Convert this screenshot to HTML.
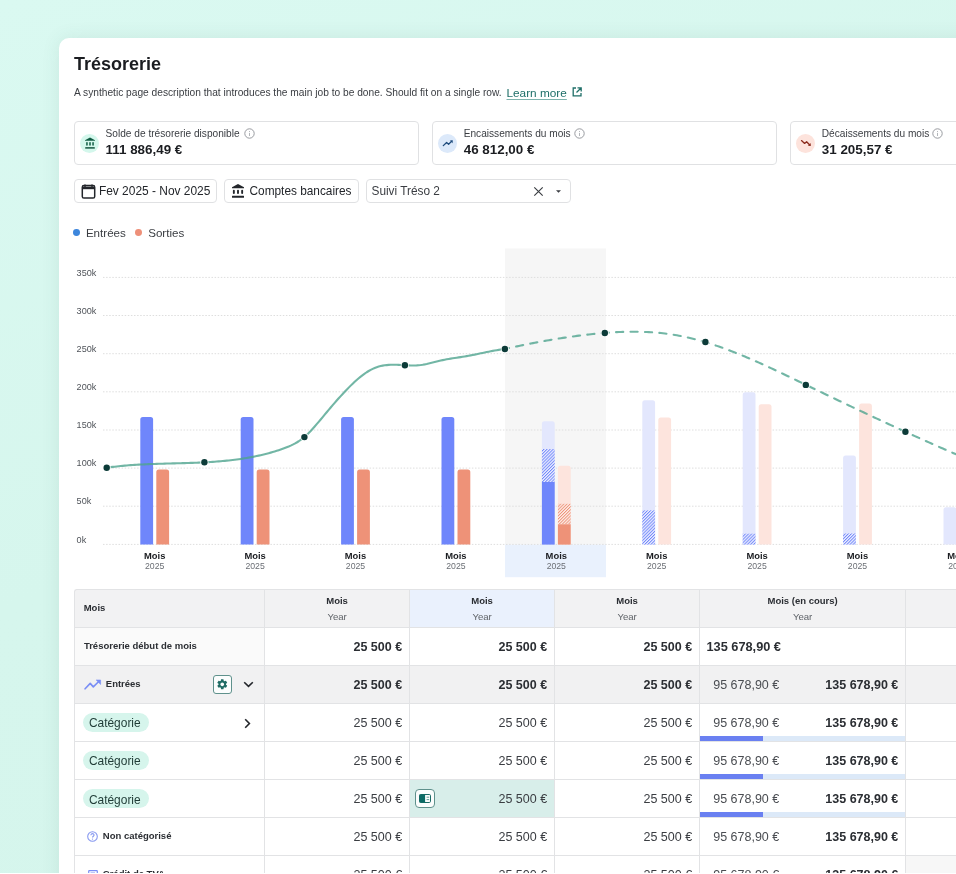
<!DOCTYPE html>
<html><head><meta charset="utf-8"><style>
html,body{margin:0;padding:0;}
#root{position:absolute;left:0;top:0;width:956px;height:874px;will-change:transform;}
body{width:956px;height:874px;overflow:hidden;position:relative;font-family:"Liberation Sans", sans-serif;background:linear-gradient(160deg,#daf9f1 0%,#d6f6ed 50%,#d5f5ec 100%);}
.a{position:absolute;}
.t{position:absolute;line-height:1;white-space:nowrap;}
.card{border:1px solid #e0e1e3;border-radius:4px;box-sizing:border-box;background:#fff;}
#main{position:absolute;left:59px;top:38px;width:1000px;height:900px;background:#fff;border-radius:10px;box-shadow:0 0 18px rgba(60,100,90,0.10);}
#bot{position:absolute;left:0;top:872.5px;width:956px;height:2px;background:#fff;}
</style></head><body>
<div id="main"></div>
<div id="root">
<div class="t" style="left:74.0px;top:55.16px;font-size:18px;font-weight:700;color:#1b1d21;">Trésorerie</div>
<div class="t" style="left:74.0px;top:87.87px;font-size:10.2px;font-weight:400;color:#3a3d42;">A synthetic page description that introduces the main job to be done. Should fit on a single row.</div>
<div class="t" style="left:506.5px;top:87.51px;font-size:11.8px;font-weight:400;color:#1f6f68;text-decoration:underline;text-decoration-color:#7fb3ad;text-underline-offset:2px;">Learn more</div>
<svg class="a" style="left:571px;top:86px" width="12" height="12" viewBox="0 0 12 12"><path d="M5 2H2.2v7.8H10V7" fill="none" stroke="#1f6f68" stroke-width="1.3"/><path d="M6.5 1.8H10.2V5.5M10 2L5.5 6.5" fill="none" stroke="#1f6f68" stroke-width="1.3"/></svg>
<div class="a card" style="left:74.2px;top:121.2px;width:344.4px;height:44px"></div>
<div class="a" style="left:80.1px;top:133.5px;width:19px;height:19px;border-radius:50%;background:#d4f7ec"></div>
<svg class="a" style="left:83.6px;top:137.0px" width="12" height="12" viewBox="0 0 12 12"><path d="M6 0.6L11 3.2V3.8H1V3.2z" fill="#0f5c43"/><rect x="2.2" y="5.1" width="1.5" height="3.6" rx="0.75" fill="#0f5c43"/><rect x="5.25" y="5.1" width="1.5" height="3.6" rx="0.75" fill="#0f5c43"/><rect x="8.3" y="5.1" width="1.5" height="3.6" rx="0.75" fill="#0f5c43"/><rect x="1.2" y="10.1" width="9.6" height="1.7" rx="0.3" fill="#2f6e58"/></svg>
<div class="t" style="left:105.6px;top:129.01px;font-size:10.15px;font-weight:400;color:#3a3d42;">Solde de trésorerie disponible</div>
<svg class="a" style="left:244.0px;top:127.9px" width="11" height="11" viewBox="0 0 11 11"><circle cx="5.5" cy="5.5" r="4.7" fill="none" stroke="#8d9095" stroke-width="0.9"/><path d="M5.5 4.9V8" stroke="#a0a3a8" stroke-width="0.8"/><circle cx="5.5" cy="3.4" r="0.5" fill="#a0a3a8"/></svg>
<div class="t" style="left:105.6px;top:143.46px;font-size:13.4px;font-weight:700;color:#1b1d21;">111 886,49 €</div>
<div class="a card" style="left:432.3px;top:121.2px;width:344.4px;height:44px"></div>
<div class="a" style="left:438.2px;top:133.5px;width:19px;height:19px;border-radius:50%;background:#dce9fa"></div>
<svg class="a" style="left:441.7px;top:137.0px" width="12" height="12" viewBox="0 0 12 12"><path d="M1.3 8.6L4.6 5.5L6.6 7.2L10 3.9" fill="none" stroke="#1d4a7c" stroke-width="1.3" stroke-linecap="round" stroke-linejoin="round"/><path d="M7.8 3.4H10.6V6.2z" fill="#1d4a7c"/></svg>
<div class="t" style="left:463.7px;top:129.01px;font-size:10.15px;font-weight:400;color:#3a3d42;">Encaissements du mois</div>
<svg class="a" style="left:573.6px;top:127.9px" width="11" height="11" viewBox="0 0 11 11"><circle cx="5.5" cy="5.5" r="4.7" fill="none" stroke="#8d9095" stroke-width="0.9"/><path d="M5.5 4.9V8" stroke="#a0a3a8" stroke-width="0.8"/><circle cx="5.5" cy="3.4" r="0.5" fill="#a0a3a8"/></svg>
<div class="t" style="left:463.7px;top:143.46px;font-size:13.4px;font-weight:700;color:#1b1d21;">46 812,00 €</div>
<div class="a card" style="left:790.4px;top:121.2px;width:344.4px;height:44px"></div>
<div class="a" style="left:796.3px;top:133.5px;width:19px;height:19px;border-radius:50%;background:#fde3dc"></div>
<svg class="a" style="left:799.8px;top:137.0px" width="12" height="12" viewBox="0 0 12 12"><path d="M1.5 3.6L4.6 6.4L6.6 4.8L10 8.2" fill="none" stroke="#8b2a1c" stroke-width="1.3" stroke-linecap="round" stroke-linejoin="round"/><path d="M7.8 8.7H10.6V5.9z" fill="#8b2a1c"/></svg>
<div class="t" style="left:821.8px;top:129.01px;font-size:10.15px;font-weight:400;color:#3a3d42;">Décaissements du mois</div>
<svg class="a" style="left:932.4px;top:127.9px" width="11" height="11" viewBox="0 0 11 11"><circle cx="5.5" cy="5.5" r="4.7" fill="none" stroke="#8d9095" stroke-width="0.9"/><path d="M5.5 4.9V8" stroke="#a0a3a8" stroke-width="0.8"/><circle cx="5.5" cy="3.4" r="0.5" fill="#a0a3a8"/></svg>
<div class="t" style="left:821.8px;top:143.46px;font-size:13.4px;font-weight:700;color:#1b1d21;">31 205,57 €</div>
<div class="a card" style="left:74px;top:178.5px;width:142.8px;height:24.5px"></div>
<svg class="a" style="left:80.5px;top:183.5px" width="15" height="15" viewBox="0 0 15 15"><rect x="1.3" y="1.6" width="12.4" height="12.4" rx="1.6" fill="none" stroke="#23262b" stroke-width="1.5"/><path d="M1.3 2.6h12.4v2.6H1.3z" fill="#23262b"/><path d="M4 0.4v2.5M11 0.4v2.5" stroke="#23262b" stroke-width="1.4"/></svg>
<div class="t" style="left:98.9px;top:185.68px;font-size:11.95px;font-weight:400;color:#23262b;">Fev 2025 - Nov 2025</div>
<div class="a card" style="left:223.7px;top:178.5px;width:135px;height:24.5px"></div>
<svg class="a" style="left:231px;top:184.3px" width="14" height="14" viewBox="0 0 14 14"><path d="M7 0L13 3.2V4.2H1V3.2z" fill="#23262b"/><rect x="1.9" y="5.8" width="1.9" height="4.2" rx="0.9" fill="#23262b"/><rect x="6.05" y="5.8" width="1.9" height="4.2" rx="0.9" fill="#23262b"/><rect x="10.2" y="5.8" width="1.9" height="4.2" rx="0.9" fill="#23262b"/><rect x="1" y="11.7" width="12" height="2" rx="0.3" fill="#23262b"/></svg>
<div class="t" style="left:249.5px;top:185.77px;font-size:11.85px;font-weight:400;color:#23262b;">Comptes bancaires</div>
<div class="a card" style="left:365.5px;top:178.5px;width:205.5px;height:24.5px"></div>
<div class="t" style="left:371.5px;top:185.77px;font-size:11.85px;font-weight:400;color:#3a3d42;">Suivi Tréso 2</div>
<svg class="a" style="left:532.5px;top:185.6px" width="11" height="11" viewBox="0 0 11 11"><path d="M1.3 1.3L9.7 9.7M9.7 1.3L1.3 9.7" stroke="#3a3d42" stroke-width="1.15"/></svg>
<svg class="a" style="left:555px;top:188.5px" width="7" height="5" viewBox="0 0 7 5"><path d="M1 1.2H6L3.5 3.8z" fill="#3a3d42"/></svg>
<div class="a" style="left:73.4px;top:229.1px;width:6.8px;height:6.8px;border-radius:50%;background:#3d86dc"></div>
<div class="t" style="left:85.9px;top:227.08px;font-size:11.6px;font-weight:400;color:#3a3d42;">Entrées</div>
<div class="a" style="left:135.3px;top:229.1px;width:6.8px;height:6.8px;border-radius:50%;background:#ee9079"></div>
<div class="t" style="left:148.2px;top:227.08px;font-size:11.6px;font-weight:400;color:#3a3d42;">Sorties</div>
<svg class="a" style="left:0;top:0" width="956" height="600" viewBox="0 0 956 600" font-family="Liberation Sans, sans-serif"><defs><pattern id="hb" patternUnits="userSpaceOnUse" width="2.2" height="3" patternTransform="rotate(45)"><rect width="2.2" height="3" fill="#eef0fe"/><rect width="0.95" height="3" fill="#6f86fb"/></pattern><pattern id="ho" patternUnits="userSpaceOnUse" width="2.2" height="3" patternTransform="rotate(45)"><rect width="2.2" height="3" fill="#fdeee9"/><rect width="0.95" height="3" fill="#ee9278"/></pattern></defs><rect x="505" y="248.5" width="101" height="296.1" fill="#f6f6f6"/><rect x="505" y="544.6" width="101" height="32.6" fill="#e9f1fd"/><line x1="103" y1="277.4" x2="956" y2="277.4" stroke="#dedede" stroke-width="1" stroke-dasharray="1.5 1.6"/><text x="76.6" y="275.6" font-size="9.1" fill="#50545a">350k</text><line x1="103" y1="315.5" x2="956" y2="315.5" stroke="#dedede" stroke-width="1" stroke-dasharray="1.5 1.6"/><text x="76.6" y="313.7" font-size="9.1" fill="#50545a">300k</text><line x1="103" y1="353.7" x2="956" y2="353.7" stroke="#dedede" stroke-width="1" stroke-dasharray="1.5 1.6"/><text x="76.6" y="351.9" font-size="9.1" fill="#50545a">250k</text><line x1="103" y1="391.8" x2="956" y2="391.8" stroke="#dedede" stroke-width="1" stroke-dasharray="1.5 1.6"/><text x="76.6" y="390.0" font-size="9.1" fill="#50545a">200k</text><line x1="103" y1="430.0" x2="956" y2="430.0" stroke="#dedede" stroke-width="1" stroke-dasharray="1.5 1.6"/><text x="76.6" y="428.2" font-size="9.1" fill="#50545a">150k</text><line x1="103" y1="468.1" x2="956" y2="468.1" stroke="#dedede" stroke-width="1" stroke-dasharray="1.5 1.6"/><text x="76.6" y="466.3" font-size="9.1" fill="#50545a">100k</text><line x1="103" y1="506.2" x2="956" y2="506.2" stroke="#dedede" stroke-width="1" stroke-dasharray="1.5 1.6"/><text x="76.6" y="504.4" font-size="9.1" fill="#50545a">50k</text><line x1="103" y1="544.4" x2="956" y2="544.4" stroke="#dedede" stroke-width="1" stroke-dasharray="1.5 1.6"/><text x="76.6" y="542.6" font-size="9.1" fill="#50545a">0k</text><path d="M140.3 544.6V419.5Q140.3 417.0 142.8 417.0H150.6Q153.1 417.0 153.1 419.5V544.6z" fill="#6f86fb"/><path d="M156.3 544.6V471.9Q156.3 469.4 158.8 469.4H166.6Q169.1 469.4 169.1 471.9V544.6z" fill="#ee9278"/><path d="M240.7 544.6V419.5Q240.7 417.0 243.2 417.0H251.0Q253.5 417.0 253.5 419.5V544.6z" fill="#6f86fb"/><path d="M256.7 544.6V471.9Q256.7 469.4 259.2 469.4H267.0Q269.5 469.4 269.5 471.9V544.6z" fill="#ee9278"/><path d="M341.1 544.6V419.5Q341.1 417.0 343.6 417.0H351.4Q353.9 417.0 353.9 419.5V544.6z" fill="#6f86fb"/><path d="M357.1 544.6V471.9Q357.1 469.4 359.6 469.4H367.4Q369.9 469.4 369.9 471.9V544.6z" fill="#ee9278"/><path d="M441.5 544.6V419.5Q441.5 417.0 444.0 417.0H451.8Q454.3 417.0 454.3 419.5V544.6z" fill="#6f86fb"/><path d="M457.5 544.6V471.9Q457.5 469.4 460.0 469.4H467.8Q470.3 469.4 470.3 471.9V544.6z" fill="#ee9278"/><path d="M541.9 544.6V423.8Q541.9 421.3 544.4 421.3H552.2Q554.7 421.3 554.7 423.8V544.6z" fill="#e3e7fd"/><rect x="541.9" y="449.0" width="12.8" height="33.0" fill="url(#hb)"/><rect x="541.9" y="482.0" width="12.8" height="62.6" fill="#6f86fb"/><path d="M557.9 544.6V468.2Q557.9 465.7 560.4 465.7H568.2Q570.7 465.7 570.7 468.2V544.6z" fill="#fde4dd"/><rect x="557.9" y="503.8" width="12.8" height="20.5" fill="url(#ho)"/><rect x="557.9" y="524.3" width="12.8" height="20.3" fill="#ee9278"/><path d="M642.3 544.6V402.8Q642.3 400.3 644.8 400.3H652.6Q655.1 400.3 655.1 402.8V544.6z" fill="#e3e7fd"/><rect x="642.3" y="510.4" width="12.8" height="34.2" fill="url(#hb)"/><path d="M658.3 544.6V420.0Q658.3 417.5 660.8 417.5H668.6Q671.1 417.5 671.1 420.0V544.6z" fill="#fde4dd"/><path d="M742.7 544.6V394.7Q742.7 392.2 745.2 392.2H753.0Q755.5 392.2 755.5 394.7V544.6z" fill="#e3e7fd"/><rect x="742.7" y="533.7" width="12.8" height="10.9" fill="url(#hb)"/><path d="M758.7 544.6V406.8Q758.7 404.3 761.2 404.3H769.0Q771.5 404.3 771.5 406.8V544.6z" fill="#fde4dd"/><path d="M843.1 544.6V458.0Q843.1 455.5 845.6 455.5H853.4Q855.9 455.5 855.9 458.0V544.6z" fill="#e3e7fd"/><rect x="843.1" y="533.5" width="12.8" height="11.1" fill="url(#hb)"/><path d="M859.1 544.6V406.0Q859.1 403.5 861.6 403.5H869.4Q871.9 403.5 871.9 406.0V544.6z" fill="#fde4dd"/><path d="M943.5 544.6V509.7Q943.5 507.2 946.0 507.2H953.8Q956.3 507.2 956.3 509.7V544.6z" fill="#e3e7fd"/><text x="154.7" y="559" font-size="9.4" font-weight="700" fill="#1b1d21" text-anchor="middle">Mois</text><text x="154.7" y="569.2" font-size="8.7" fill="#6b6f75" text-anchor="middle">2025</text><text x="255.1" y="559" font-size="9.4" font-weight="700" fill="#1b1d21" text-anchor="middle">Mois</text><text x="255.1" y="569.2" font-size="8.7" fill="#6b6f75" text-anchor="middle">2025</text><text x="355.5" y="559" font-size="9.4" font-weight="700" fill="#1b1d21" text-anchor="middle">Mois</text><text x="355.5" y="569.2" font-size="8.7" fill="#6b6f75" text-anchor="middle">2025</text><text x="455.9" y="559" font-size="9.4" font-weight="700" fill="#1b1d21" text-anchor="middle">Mois</text><text x="455.9" y="569.2" font-size="8.7" fill="#6b6f75" text-anchor="middle">2025</text><text x="556.3" y="559" font-size="9.4" font-weight="700" fill="#1b1d21" text-anchor="middle">Mois</text><text x="556.3" y="569.2" font-size="8.7" fill="#6b6f75" text-anchor="middle">2025</text><text x="656.7" y="559" font-size="9.4" font-weight="700" fill="#1b1d21" text-anchor="middle">Mois</text><text x="656.7" y="569.2" font-size="8.7" fill="#6b6f75" text-anchor="middle">2025</text><text x="757.1" y="559" font-size="9.4" font-weight="700" fill="#1b1d21" text-anchor="middle">Mois</text><text x="757.1" y="569.2" font-size="8.7" fill="#6b6f75" text-anchor="middle">2025</text><text x="857.5" y="559" font-size="9.4" font-weight="700" fill="#1b1d21" text-anchor="middle">Mois</text><text x="857.5" y="569.2" font-size="8.7" fill="#6b6f75" text-anchor="middle">2025</text><text x="957.9" y="559" font-size="9.4" font-weight="700" fill="#1b1d21" text-anchor="middle">Mois</text><text x="957.9" y="569.2" font-size="8.7" fill="#6b6f75" text-anchor="middle">2025</text><path d="M106.70 467.70 L108.70 467.43 L110.70 467.16 L112.70 466.91 L114.70 466.67 L116.70 466.44 L118.70 466.22 L120.70 466.02 L122.70 465.83 L124.70 465.65 L126.70 465.48 L128.70 465.32 L130.70 465.16 L132.70 465.02 L134.70 464.89 L136.70 464.76 L138.70 464.64 L140.70 464.53 L142.70 464.43 L144.70 464.33 L146.70 464.24 L148.70 464.15 L150.70 464.07 L152.70 464.00 L154.70 463.93 L156.70 463.86 L158.70 463.80 L160.70 463.74 L162.70 463.68 L164.70 463.62 L166.70 463.57 L168.70 463.52 L170.70 463.46 L172.70 463.41 L174.70 463.36 L176.70 463.31 L178.70 463.26 L180.70 463.20 L182.70 463.15 L184.70 463.09 L186.70 463.03 L188.70 462.97 L190.70 462.90 L192.70 462.83 L194.70 462.76 L196.70 462.68 L198.70 462.60 L200.70 462.51 L202.70 462.41 L204.70 462.31 L206.70 462.20 L208.70 462.09 L210.70 461.97 L212.70 461.83 L214.70 461.69 L216.70 461.55 L218.70 461.39 L220.70 461.22 L222.70 461.04 L224.70 460.86 L226.70 460.66 L228.70 460.44 L230.70 460.22 L232.70 459.99 L234.70 459.74 L236.70 459.48 L238.70 459.20 L240.70 458.92 L242.70 458.61 L244.70 458.29 L246.70 457.96 L248.70 457.61 L250.70 457.25 L252.70 456.86 L254.70 456.47 L256.70 456.05 L258.70 455.62 L260.70 455.16 L262.70 454.69 L264.70 454.20 L266.70 453.69 L268.70 453.17 L270.70 452.62 L272.70 452.05 L274.70 451.46 L276.70 450.84 L278.70 450.21 L280.70 449.54 L282.70 448.84 L284.70 448.10 L286.70 447.32 L288.70 446.49 L290.70 445.60 L292.70 444.64 L294.70 443.61 L296.70 442.49 L298.70 441.25 L300.70 439.90 L302.70 438.40 L304.70 436.75 L306.70 434.94 L308.70 432.99 L310.70 430.92 L312.70 428.74 L314.70 426.49 L316.70 424.18 L318.70 421.82 L320.70 419.45 L322.70 417.06 L324.70 414.66 L326.70 412.27 L328.70 409.88 L330.70 407.51 L332.70 405.17 L334.70 402.85 L336.70 400.56 L338.70 398.31 L340.70 396.10 L342.70 393.92 L344.70 391.78 L346.70 389.69 L348.70 387.63 L350.70 385.63 L352.70 383.69 L354.70 381.81 L356.70 380.00 L358.70 378.27 L360.70 376.62 L362.70 375.07 L364.70 373.60 L366.70 372.25 L368.70 371.00 L370.70 369.86 L372.70 368.85 L374.70 367.97 L376.70 367.22 L378.70 366.58 L380.70 366.06 L382.70 365.64 L384.70 365.32 L386.70 365.08 L388.70 364.91 L390.70 364.81 L392.70 364.77 L394.70 364.77 L396.70 364.82 L398.70 364.89 L400.70 364.98 L402.70 365.08 L404.70 365.19 L406.70 365.29 L408.70 365.37 L410.70 365.43 L412.70 365.45 L414.70 365.43 L416.70 365.36 L418.70 365.22 L420.70 365.02 L422.70 364.74 L424.70 364.40 L426.70 364.01 L428.70 363.57 L430.70 363.09 L432.70 362.60 L434.70 362.09 L436.70 361.58 L438.70 361.07 L440.70 360.58 L442.70 360.11 L444.70 359.68 L446.70 359.29 L448.70 358.93 L450.70 358.60 L452.70 358.29 L454.70 357.99 L456.70 357.70 L458.70 357.41 L460.70 357.12 L462.70 356.81 L464.70 356.49 L466.70 356.14 L468.70 355.78 L470.70 355.40 L472.70 355.00 L474.70 354.60 L476.70 354.19 L478.70 353.77 L480.70 353.34 L482.70 352.92 L484.70 352.50 L486.70 352.09 L488.70 351.68 L490.70 351.28 L492.70 350.90 L494.70 350.53 L496.70 350.18 L498.70 349.86 L500.70 349.55 L502.70 349.27 L504.70 349.02 L504.90 349.00" fill="none" stroke="#4fa48f" stroke-opacity="0.8" stroke-width="2.1" stroke-linecap="round" stroke-linejoin="round"/><path d="M504.90 349.00 L506.90 348.53 L508.90 348.08 L510.90 347.65 L512.90 347.21 L514.90 346.78 L516.90 346.36 L518.90 345.94 L520.90 345.52 L522.90 345.11 L524.90 344.70 L526.90 344.30 L528.90 343.90 L530.90 343.51 L532.90 343.12 L534.90 342.73 L536.90 342.35 L538.90 341.98 L540.90 341.61 L542.90 341.24 L544.90 340.88 L546.90 340.53 L548.90 340.18 L550.90 339.84 L552.90 339.50 L554.90 339.17 L556.90 338.84 L558.90 338.52 L560.90 338.20 L562.90 337.89 L564.90 337.59 L566.90 337.29 L568.90 337.00 L570.90 336.72 L572.90 336.44 L574.90 336.17 L576.90 335.90 L578.90 335.64 L580.90 335.39 L582.90 335.14 L584.90 334.90 L586.90 334.67 L588.90 334.44 L590.90 334.22 L592.90 334.01 L594.90 333.81 L596.90 333.61 L598.90 333.42 L600.90 333.24 L602.90 333.07 L604.90 332.91 L606.90 332.75 L608.90 332.61 L610.90 332.47 L612.90 332.35 L614.90 332.23 L616.90 332.13 L618.90 332.03 L620.90 331.95 L622.90 331.88 L624.90 331.82 L626.90 331.77 L628.90 331.74 L630.90 331.71 L632.90 331.70 L634.90 331.71 L636.90 331.72 L638.90 331.75 L640.90 331.80 L642.90 331.86 L644.90 331.93 L646.90 332.02 L648.90 332.12 L650.90 332.24 L652.90 332.37 L654.90 332.52 L656.90 332.69 L658.90 332.87 L660.90 333.07 L662.90 333.28 L664.90 333.52 L666.90 333.77 L668.90 334.04 L670.90 334.33 L672.90 334.63 L674.90 334.96 L676.90 335.30 L678.90 335.67 L680.90 336.05 L682.90 336.45 L684.90 336.87 L686.90 337.31 L688.90 337.77 L690.90 338.24 L692.90 338.74 L694.90 339.25 L696.90 339.77 L698.90 340.31 L700.90 340.87 L702.90 341.45 L704.90 342.03 L706.90 342.64 L708.90 343.26 L710.90 343.89 L712.90 344.54 L714.90 345.20 L716.90 345.88 L718.90 346.57 L720.90 347.27 L722.90 347.98 L724.90 348.71 L726.90 349.45 L728.90 350.20 L730.90 350.96 L732.90 351.74 L734.90 352.52 L736.90 353.32 L738.90 354.12 L740.90 354.94 L742.90 355.76 L744.90 356.59 L746.90 357.44 L748.90 358.29 L750.90 359.15 L752.90 360.02 L754.90 360.89 L756.90 361.77 L758.90 362.66 L760.90 363.56 L762.90 364.46 L764.90 365.37 L766.90 366.29 L768.90 367.21 L770.90 368.13 L772.90 369.06 L774.90 370.00 L776.90 370.94 L778.90 371.88 L780.90 372.83 L782.90 373.78 L784.90 374.73 L786.90 375.69 L788.90 376.65 L790.90 377.61 L792.90 378.57 L794.90 379.53 L796.90 380.50 L798.90 381.46 L800.90 382.43 L802.90 383.40 L804.90 384.36 L806.90 385.33 L808.90 386.29 L810.90 387.26 L812.90 388.22 L814.90 389.19 L816.90 390.15 L818.90 391.11 L820.90 392.07 L822.90 393.03 L824.90 393.99 L826.90 394.95 L828.90 395.91 L830.90 396.87 L832.90 397.83 L834.90 398.78 L836.90 399.74 L838.90 400.69 L840.90 401.65 L842.90 402.60 L844.90 403.55 L846.90 404.50 L848.90 405.45 L850.90 406.40 L852.90 407.35 L854.90 408.29 L856.90 409.24 L858.90 410.18 L860.90 411.13 L862.90 412.07 L864.90 413.01 L866.90 413.95 L868.90 414.89 L870.90 415.83 L872.90 416.76 L874.90 417.70 L876.90 418.63 L878.90 419.56 L880.90 420.49 L882.90 421.42 L884.90 422.35 L886.90 423.28 L888.90 424.20 L890.90 425.13 L892.90 426.05 L894.90 426.97 L896.90 427.89 L898.90 428.81 L900.90 429.72 L902.90 430.64 L904.90 431.55 L906.90 432.46 L908.90 433.37 L910.90 434.28 L912.90 435.19 L914.90 436.09 L916.90 437.00 L918.90 437.90 L920.90 438.80 L922.90 439.69 L924.90 440.59 L926.90 441.48 L928.90 442.38 L930.90 443.27 L932.90 444.16 L934.90 445.04 L936.90 445.93 L938.90 446.81 L940.90 447.69 L942.90 448.57 L944.90 449.44 L946.90 450.32 L948.90 451.19 L950.90 452.06 L952.90 452.93 L954.90 453.79 L956.90 454.66 L958.90 455.52 L960.90 456.38 L962.00 456.85" fill="none" stroke="#4fa48f" stroke-opacity="0.8" stroke-width="2.1" stroke-linecap="round" stroke-linejoin="round" stroke-dasharray="7.2 7.24" stroke-dashoffset="2.98"/><circle cx="106.7" cy="467.7" r="4.1" fill="#fff" fill-opacity="0.85"/><circle cx="106.7" cy="467.7" r="3.2" fill="#0c3b38"/><circle cx="204.4" cy="462.3" r="4.1" fill="#fff" fill-opacity="0.85"/><circle cx="204.4" cy="462.3" r="3.2" fill="#0c3b38"/><circle cx="304.4" cy="437.1" r="4.1" fill="#fff" fill-opacity="0.85"/><circle cx="304.4" cy="437.1" r="3.2" fill="#0c3b38"/><circle cx="404.9" cy="365.3" r="4.1" fill="#fff" fill-opacity="0.85"/><circle cx="404.9" cy="365.3" r="3.2" fill="#0c3b38"/><circle cx="504.9" cy="349.0" r="4.1" fill="#fff" fill-opacity="0.85"/><circle cx="504.9" cy="349.0" r="3.2" fill="#0c3b38"/><circle cx="604.8" cy="333.0" r="4.1" fill="#fff" fill-opacity="0.85"/><circle cx="604.8" cy="333.0" r="3.2" fill="#0c3b38"/><circle cx="705.4" cy="342" r="4.1" fill="#fff" fill-opacity="0.85"/><circle cx="705.4" cy="342" r="3.2" fill="#0c3b38"/><circle cx="805.8" cy="384.9" r="4.1" fill="#fff" fill-opacity="0.85"/><circle cx="805.8" cy="384.9" r="3.2" fill="#0c3b38"/><circle cx="905.4" cy="431.8" r="4.1" fill="#fff" fill-opacity="0.85"/><circle cx="905.4" cy="431.8" r="3.2" fill="#0c3b38"/></svg>
<div class="a" style="left:74.3px;top:589.5px;width:881.7px;height:38.3px;background:#f2f2f3"></div>
<div class="a" style="left:409.6px;top:589.5px;width:145.0px;height:38.3px;background:#eaf1fd"></div>
<div class="a" style="left:74.3px;top:627.8px;width:190.3px;height:37.5px;background:#fafafa"></div>
<div class="a" style="left:74.3px;top:665.3px;width:881.7px;height:37.8px;background:#f1f1f2"></div>
<div class="a" style="left:409.6px;top:779.2px;width:145.0px;height:38.3px;background:#d8eeea"></div>
<div class="a" style="left:905.6px;top:855.0px;width:50.4px;height:38.0px;background:#f7f7f7"></div>
<div class="a" style="left:699.6px;top:735.8px;width:206.0px;height:5.0px;background:#dce9f8"></div>
<div class="a" style="left:699.6px;top:735.8px;width:63.6px;height:5.0px;background:#6a80f1"></div>
<div class="a" style="left:699.6px;top:774.0px;width:206.0px;height:5.0px;background:#dce9f8"></div>
<div class="a" style="left:699.6px;top:774.0px;width:63.6px;height:5.0px;background:#6a80f1"></div>
<div class="a" style="left:699.6px;top:812.3px;width:206.0px;height:5.0px;background:#dce9f8"></div>
<div class="a" style="left:699.6px;top:812.3px;width:63.6px;height:5.0px;background:#6a80f1"></div>
<div class="a" style="left:74.3px;top:589.0px;width:881.7px;height:1px;background:#e2e3e5"></div>
<div class="a" style="left:74.3px;top:627.3px;width:881.7px;height:1px;background:#e2e3e5"></div>
<div class="a" style="left:74.3px;top:664.8px;width:881.7px;height:1px;background:#e2e3e5"></div>
<div class="a" style="left:74.3px;top:702.6px;width:881.7px;height:1px;background:#e2e3e5"></div>
<div class="a" style="left:74.3px;top:740.5px;width:881.7px;height:1px;background:#e2e3e5"></div>
<div class="a" style="left:74.3px;top:778.7px;width:881.7px;height:1px;background:#e2e3e5"></div>
<div class="a" style="left:74.3px;top:817.0px;width:881.7px;height:1px;background:#e2e3e5"></div>
<div class="a" style="left:74.3px;top:854.5px;width:881.7px;height:1px;background:#e2e3e5"></div>
<div class="a" style="left:73.8px;top:589.5px;width:1px;height:284.5px;background:#e2e3e5"></div>
<div class="a" style="left:264.1px;top:589.5px;width:1px;height:284.5px;background:#e2e3e5"></div>
<div class="a" style="left:409.1px;top:589.5px;width:1px;height:284.5px;background:#e2e3e5"></div>
<div class="a" style="left:554.1px;top:589.5px;width:1px;height:284.5px;background:#e2e3e5"></div>
<div class="a" style="left:699.1px;top:589.5px;width:1px;height:284.5px;background:#e2e3e5"></div>
<div class="a" style="left:905.1px;top:589.5px;width:1px;height:284.5px;background:#e2e3e5"></div>
<div class="a" style="left:73.8px;top:589.0px;width:5px;height:5px;background:#fff"></div>
<div class="a" style="left:73.8px;top:589.0px;width:5px;height:5px;box-sizing:border-box;border-left:1px solid #e2e3e5;border-top:1px solid #e2e3e5;border-top-left-radius:3px;background:#f2f2f3"></div>
<div class="t" style="left:83.7px;top:603.46px;font-size:9.5px;font-weight:700;color:#2b2e33;">Mois</div>
<div class="t" style="left:237.1px;width:200px;text-align:center;top:595.76px;font-size:9.5px;font-weight:700;color:#2b2e33;">Mois</div>
<div class="t" style="left:237.1px;width:200px;text-align:center;top:611.97px;font-size:9.6px;font-weight:400;color:#5f6368;">Year</div>
<div class="t" style="left:382.1px;width:200px;text-align:center;top:595.76px;font-size:9.5px;font-weight:700;color:#2b2e33;">Mois</div>
<div class="t" style="left:382.1px;width:200px;text-align:center;top:611.97px;font-size:9.6px;font-weight:400;color:#5f6368;">Year</div>
<div class="t" style="left:527.1px;width:200px;text-align:center;top:595.76px;font-size:9.5px;font-weight:700;color:#2b2e33;">Mois</div>
<div class="t" style="left:527.1px;width:200px;text-align:center;top:611.97px;font-size:9.6px;font-weight:400;color:#5f6368;">Year</div>
<div class="t" style="left:702.6px;width:200px;text-align:center;top:595.76px;font-size:9.5px;font-weight:700;color:#2b2e33;">Mois (en cours)</div>
<div class="t" style="left:702.6px;width:200px;text-align:center;top:611.97px;font-size:9.6px;font-weight:400;color:#5f6368;">Year</div>
<div class="t" style="left:83.9px;top:640.66px;font-size:9.5px;font-weight:700;color:#2b2e33;">Trésorerie début de mois</div>
<div class="t" style="right:553.9px;top:640.57px;font-size:12.5px;font-weight:700;color:#2b2e33;">25 500 €</div>
<div class="t" style="right:408.9px;top:640.57px;font-size:12.5px;font-weight:700;color:#2b2e33;">25 500 €</div>
<div class="t" style="right:263.9px;top:640.57px;font-size:12.5px;font-weight:700;color:#2b2e33;">25 500 €</div>
<div class="t" style="left:706.5px;top:640.96px;font-size:12.75px;font-weight:700;color:#2b2e33;">135 678,90 €</div>
<svg class="a" style="left:84px;top:678px" width="18" height="12" viewBox="0 0 18 12"><path d="M1.1 10.8L6.2 5.4L9.3 8.9L15 3.3" fill="none" stroke="#7a8ef5" stroke-width="1.6" stroke-linejoin="round" stroke-linecap="round"/><path d="M12.2 2H16.6V6.4z" fill="#7a8ef5" stroke="#7a8ef5" stroke-width="0.6" stroke-linejoin="round"/></svg>
<div class="t" style="left:105.8px;top:678.96px;font-size:9.5px;font-weight:700;color:#2b2e33;">Entrées</div>
<div class="a" style="left:213.4px;top:675.3px;width:16.5px;height:16.5px;border:1px solid #5f918c;border-radius:3px;background:#fbfdfd"></div>
<svg class="a" style="left:216.2px;top:678.3px" width="12.5" height="12.5" viewBox="0 0 24 24"><path fill="#1f6b64" d="M19.14 12.94c.04-.3.06-.61.06-.94 0-.32-.02-.64-.07-.94l2.03-1.58a.49.49 0 0 0 .12-.61l-1.92-3.32a.488.488 0 0 0-.59-.22l-2.39.96c-.5-.38-1.03-.7-1.62-.94l-.36-2.54a.484.484 0 0 0-.48-.41h-3.84c-.24 0-.43.17-.47.41l-.36 2.54c-.59.24-1.13.57-1.62.94l-2.39-.96c-.22-.08-.47 0-.59.22L2.74 8.87c-.12.21-.08.47.12.61l2.03 1.58c-.05.3-.09.63-.09.94s.02.64.07.94l-2.03 1.58a.49.49 0 0 0-.12.61l1.92 3.32c.12.22.37.29.59.22l2.39-.96c.5.38 1.03.7 1.62.94l.36 2.54c.05.24.24.41.48.41h3.84c.24 0 .44-.17.47-.41l.36-2.54c.59-.24 1.13-.56 1.62-.94l2.39.96c.22.08.47 0 .59-.22l1.92-3.32c.12-.22.07-.47-.12-.61l-2.01-1.58zM12 15.6c-1.98 0-3.6-1.62-3.6-3.6s1.62-3.6 3.6-3.6 3.6 1.62 3.6 3.6-1.62 3.6-3.6 3.6z"/></svg>
<svg class="a" style="left:242.5px;top:681px" width="11" height="7" viewBox="0 0 11 7"><path d="M1.2 1.2L5.5 5.4L9.8 1.2" fill="none" stroke="#23262b" stroke-width="1.6"/></svg>
<div class="t" style="right:553.9px;top:678.92px;font-size:12.5px;font-weight:700;color:#2b2e33;">25 500 €</div>
<div class="t" style="right:408.9px;top:678.92px;font-size:12.5px;font-weight:700;color:#2b2e33;">25 500 €</div>
<div class="t" style="right:263.9px;top:678.92px;font-size:12.5px;font-weight:700;color:#2b2e33;">25 500 €</div>
<div class="t" style="left:713.2px;top:678.92px;font-size:12.5px;font-weight:400;color:#4a4d52;">95 678,90 €</div>
<div class="t" style="right:57.7px;top:678.92px;font-size:12.5px;font-weight:700;color:#2b2e33;">135 678,90 €</div>
<div class="a" style="left:83.2px;top:712.9px;width:65.6px;height:19px;border-radius:10px;background:#d6f5ec"></div>
<div class="t" style="left:88.9px;top:718.23px;font-size:11.95px;font-weight:400;color:#1f3b36;">Catégorie</div>
<div class="t" style="right:553.9px;top:717.07px;font-size:12.5px;font-weight:400;color:#3a3d42;">25 500 €</div>
<div class="t" style="right:408.9px;top:717.07px;font-size:12.5px;font-weight:400;color:#3a3d42;">25 500 €</div>
<div class="t" style="right:263.9px;top:717.07px;font-size:12.5px;font-weight:400;color:#3a3d42;">25 500 €</div>
<div class="t" style="left:713.2px;top:717.07px;font-size:12.5px;font-weight:400;color:#4a4d52;">95 678,90 €</div>
<div class="t" style="right:57.7px;top:717.07px;font-size:12.5px;font-weight:700;color:#2b2e33;">135 678,90 €</div>
<div class="a" style="left:83.2px;top:751.0px;width:65.6px;height:19px;border-radius:10px;background:#d6f5ec"></div>
<div class="t" style="left:88.9px;top:756.28px;font-size:11.95px;font-weight:400;color:#1f3b36;">Catégorie</div>
<div class="t" style="right:553.9px;top:755.12px;font-size:12.5px;font-weight:400;color:#3a3d42;">25 500 €</div>
<div class="t" style="right:408.9px;top:755.12px;font-size:12.5px;font-weight:400;color:#3a3d42;">25 500 €</div>
<div class="t" style="right:263.9px;top:755.12px;font-size:12.5px;font-weight:400;color:#3a3d42;">25 500 €</div>
<div class="t" style="left:713.2px;top:755.12px;font-size:12.5px;font-weight:400;color:#4a4d52;">95 678,90 €</div>
<div class="t" style="right:57.7px;top:755.12px;font-size:12.5px;font-weight:700;color:#2b2e33;">135 678,90 €</div>
<div class="a" style="left:83.2px;top:789.2px;width:65.6px;height:19px;border-radius:10px;background:#d6f5ec"></div>
<div class="t" style="left:88.9px;top:794.53px;font-size:11.95px;font-weight:400;color:#1f3b36;">Catégorie</div>
<div class="t" style="right:553.9px;top:793.37px;font-size:12.5px;font-weight:400;color:#3a3d42;">25 500 €</div>
<div class="t" style="right:408.9px;top:793.37px;font-size:12.5px;font-weight:400;color:#3a3d42;">25 500 €</div>
<div class="t" style="right:263.9px;top:793.37px;font-size:12.5px;font-weight:400;color:#3a3d42;">25 500 €</div>
<div class="t" style="left:713.2px;top:793.37px;font-size:12.5px;font-weight:400;color:#4a4d52;">95 678,90 €</div>
<div class="t" style="right:57.7px;top:793.37px;font-size:12.5px;font-weight:700;color:#2b2e33;">135 678,90 €</div>
<svg class="a" style="left:244px;top:717.5px" width="7" height="11" viewBox="0 0 7 11"><path d="M1.2 1.2L5.4 5.5L1.2 9.8" fill="none" stroke="#23262b" stroke-width="1.6"/></svg>
<div class="a" style="left:415.1px;top:789.1px;width:17.6px;height:17.4px;border:1px solid #5f918c;border-radius:4px;background:#fbfdfd"></div>
<svg class="a" style="left:419px;top:794px" width="12" height="9" viewBox="0 0 12 9"><rect x="0.5" y="0.5" width="11" height="8" rx="1.2" fill="none" stroke="#1a6a65" stroke-width="1"/><rect x="0.5" y="0.5" width="5.6" height="8" fill="#0b6a65"/><path d="M7.6 3.2h2.6M7.6 5.6h2.6" stroke="#4f8f8a" stroke-width="0.9"/></svg>
<svg class="a" style="left:87.1px;top:831px" width="11" height="11" viewBox="0 0 11 11"><circle cx="5.5" cy="5.5" r="4.8" fill="none" stroke="#8799f0" stroke-width="1.1"/><path d="M3.9 4.3c0-1 .7-1.7 1.6-1.7s1.6.7 1.6 1.5c0 1.1-1.6 1.2-1.6 2.4" fill="none" stroke="#8799f0" stroke-width="1.1"/><circle cx="5.5" cy="8.1" r="0.65" fill="#8799f0"/></svg>
<div class="t" style="left:102.8px;top:831.26px;font-size:9.5px;font-weight:700;color:#2b2e33;">Non catégorisé</div>
<div class="t" style="right:553.9px;top:831.27px;font-size:12.5px;font-weight:400;color:#3a3d42;">25 500 €</div>
<div class="t" style="right:408.9px;top:831.27px;font-size:12.5px;font-weight:400;color:#3a3d42;">25 500 €</div>
<div class="t" style="right:263.9px;top:831.27px;font-size:12.5px;font-weight:400;color:#3a3d42;">25 500 €</div>
<div class="t" style="left:713.2px;top:831.27px;font-size:12.5px;font-weight:400;color:#4a4d52;">95 678,90 €</div>
<div class="t" style="right:57.7px;top:831.27px;font-size:12.5px;font-weight:700;color:#2b2e33;">135 678,90 €</div>
<svg class="a" style="left:87.5px;top:869.6px" width="10" height="6" viewBox="0 0 10 6"><path d="M0.7 6V1.2Q0.7 0.6 1.3 0.6H8.7Q9.3 0.6 9.3 1.2V6" fill="none" stroke="#7a8ef5" stroke-width="1.2"/><path d="M2.5 3H7" stroke="#7a8ef5" stroke-width="1"/></svg>
<div class="t" style="left:102.8px;top:868.86px;font-size:9.5px;font-weight:700;color:#2b2e33;">Crédit de TVA</div>
<div class="t" style="right:553.9px;top:869.02px;font-size:12.5px;font-weight:400;color:#3a3d42;">25 500 €</div>
<div class="t" style="right:408.9px;top:869.02px;font-size:12.5px;font-weight:400;color:#3a3d42;">25 500 €</div>
<div class="t" style="right:263.9px;top:869.02px;font-size:12.5px;font-weight:400;color:#3a3d42;">25 500 €</div>
<div class="t" style="left:713.2px;top:869.02px;font-size:12.5px;font-weight:400;color:#4a4d52;">95 678,90 €</div>
<div class="t" style="right:57.7px;top:869.02px;font-size:12.5px;font-weight:700;color:#2b2e33;">135 678,90 €</div>
</div>
<div id="bot"></div>
</body></html>
